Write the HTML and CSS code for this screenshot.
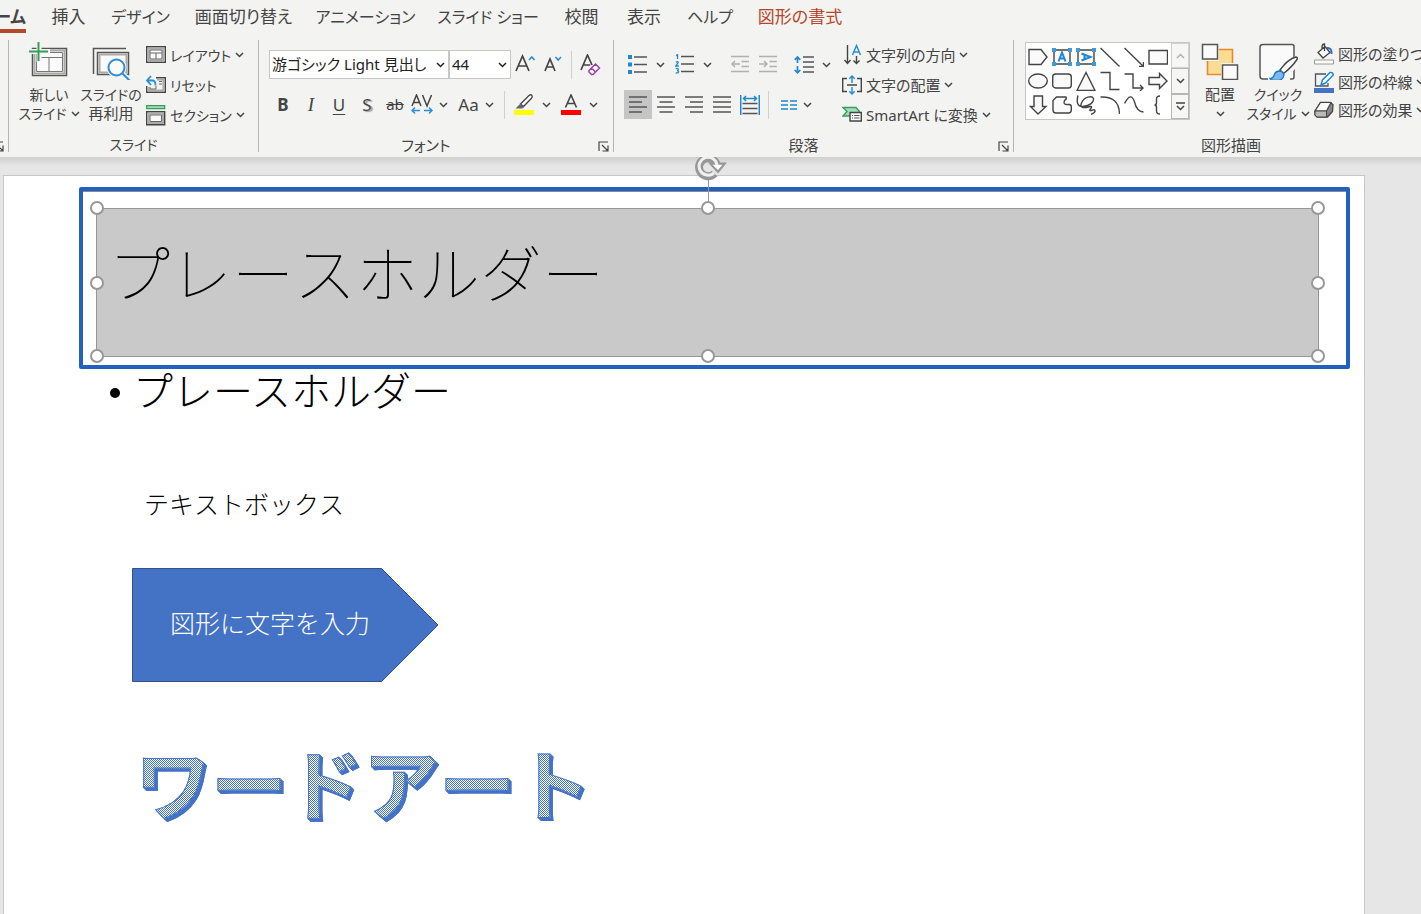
FILE: index.html
```html
<!DOCTYPE html>
<html lang="ja">
<head>
<meta charset="utf-8">
<title>プレゼンテーション</title>
<link rel="stylesheet" href="styles.css">
</head>
<body>
<svg class="defs" aria-hidden="true">
  <symbol id="chev" viewBox="0 0 9 6"><path d="M1 1l3.500 3.500L8 1" fill="none" stroke="currentColor" stroke-width="1.500"/></symbol>
  <symbol id="launch" viewBox="0 0 11 11"><path d="M1 10V1h9M4 4l5.500 5.500M10 4.500V10H4.500" fill="none" stroke="#444" stroke-width="1.200"/></symbol>
</svg>

<nav class="tabs">
  <a class="tab tab-home" href="#home">ホーム</a>
  <a class="tab" href="#insert">挿入</a>
  <a class="tab kana" href="#design">デザイン</a>
  <a class="tab" href="#transitions">画面切り替え</a>
  <a class="tab kana" href="#animations">アニメーション</a>
  <a class="tab kana" href="#slideshow">スライド ショー</a>
  <a class="tab" href="#review">校閲</a>
  <a class="tab" href="#view">表示</a>
  <a class="tab kana" href="#help">ヘルプ</a>
  <a class="tab tab-format" href="#format">図形の書式</a>
</nav>

<div class="ribbon">
  <section class="group group-clip">
    <button class="launcher" aria-label="クリップボード"><svg width="11" height="11"><use href="#launch"/></svg></button>
  </section>

  <section class="group group-slides">
    <div class="group-body">
      <button class="big big-new">
        <svg width="40" height="40" viewBox="0 0 40 40">
          <path d="M3.500 8.500h34v27h-34z" fill="#fafafa" stroke="#555" stroke-width="1.500"/>
          <path d="M5.500 10.500h30v23h-30z" fill="#fafafa" stroke="#aaa" stroke-width="2"/>
          <path d="M7.500 12.500h26v19h-26zM7.500 17.500h26M20 17.500v14" fill="none" stroke="#777"/>
          <path d="M0 11.500h21M10 2v20" stroke="#f3f3f1" stroke-width="5"/>
          <path d="M0 11.500h19M9.500 2v19" stroke="#35a05a" stroke-width="2"/>
        </svg>
        <span>新しい</span><span>スライド <svg class="chev"><use href="#chev"/></svg></span>
      </button>
      <button class="big big-reuse">
        <svg width="40" height="40" viewBox="0 0 40 40">
          <path d="M2.500 34V8.500H35" fill="none" stroke="#555" stroke-width="1.500"/>
          <path d="M6.500 12.500h31v22h-31z" fill="#fafafa" stroke="#555" stroke-width="1.500"/>
          <path d="M8.500 14.500h27v18h-27z" fill="#fafafa" stroke="#aaa" stroke-width="2"/>
          <circle cx="25.500" cy="27.500" r="10" fill="#f3f3f1"/>
          <path d="M31 33l9 9" stroke="#f3f3f1" stroke-width="5"/>
          <circle cx="25.500" cy="27.500" r="8" fill="#fafafa" stroke="#2b8fd6" stroke-width="2"/>
          <path d="M31 33l8 8" stroke="#2b8fd6" stroke-width="2"/>
        </svg>
        <span>スライドの</span><span class="kanji">再利用</span>
      </button>
      <div class="rows">
        <button class="row"><svg width="20" height="20" viewBox="0 0 20 20"><path d="M.7 1.700h18.600v15.600H.7z" fill="#fafafa" stroke="#444" stroke-width="1.400"/><path d="M2.500 3.500h15v12h-15z" fill="none" stroke="#aaa" stroke-width="2"/><path d="M4 5h12v9H4zM4 8h12M10 8v6" fill="none" stroke="#666"/></svg><span>レイアウト</span><svg class="chev"><use href="#chev"/></svg></button>
        <button class="row"><svg width="20" height="20" viewBox="0 0 20 20"><path d="M10 2.700h9.300v14.600H.7V11" fill="none" stroke="#444" stroke-width="1.400"/><path d="M11 4.500h6.500v11h-15V12" fill="none" stroke="#aaa" stroke-width="2"/><path d="M13 6.500h3M13 9h3M10 11v3H4v-2" fill="none" stroke="#666"/><path d="M1 5.500h5.500q3 0 3 5M5 1L1 5.500 5 10" fill="none" stroke="#2b8fd6" stroke-width="1.800"/></svg><span>リセット</span></button>
        <button class="row"><svg width="20" height="22" viewBox="0 0 20 22"><path d="M.7 1.700h18v3H.7z" fill="#a8dcb8" stroke="#35a05a" stroke-width="1.200"/><path d="M.7 7.700h18v13H.7z" fill="#fafafa" stroke="#444" stroke-width="1.400"/><path d="M2.500 9.500h14.500v9.500h-14.500z" fill="none" stroke="#aaa" stroke-width="2"/><path d="M4 11h11.500v6.500H4z" fill="none" stroke="#666"/></svg><span>セクション</span><svg class="chev"><use href="#chev"/></svg></button>
      </div>
    </div>
    <div class="group-label">スライド</div>
  </section>

  <section class="group group-font">
    <div class="group-body stack">
      <div class="line">
        <label class="combo combo-name"><select aria-label="フォント"><option>游ゴシック Light 見出し</option></select><svg class="chev"><use href="#chev"/></svg></label>
        <label class="combo combo-size"><select aria-label="フォント サイズ"><option>44</option></select><svg class="chev"><use href="#chev"/></svg></label>
        <button class="tool w28" aria-label="フォント サイズの拡大"><svg width="20" height="22" viewBox="0 0 20 22"><path d="M1 17L7.500 2 14 17M3.200 12h8.600" fill="none" stroke="#444" stroke-width="1.700"/><path d="M14 6l2.700-3L19.500 6" fill="none" stroke="#2b8fd6" stroke-width="1.600"/></svg></button>
        <button class="tool w28" aria-label="フォント サイズの縮小"><svg width="20" height="22" viewBox="0 0 20 22"><path d="M2 17L7 5 12 17M3.700 13h6.600" fill="none" stroke="#444" stroke-width="1.700"/><path d="M12.500 3l2.700 3L18 3" fill="none" stroke="#2b8fd6" stroke-width="1.600"/></svg></button>
        <i class="sep sep-clear"></i>
        <button class="tool w36" aria-label="書式のクリア"><svg width="22" height="22" viewBox="0 0 22 22"><path d="M2 16L8.500 1 13 11M4.200 11h7" fill="none" stroke="#444" stroke-width="1.700"/><path d="M10 16.500l6.500-6.500 4 4-6.500 6.500h-1.500L10 18zM12.500 14l4 4" fill="#fafafa" stroke="#9b3fa8" stroke-width="1.500"/></svg></button>
      </div>
      <div class="line">
        <button class="tool w28 t-b">B</button>
        <button class="tool w28 t-i">I</button>
        <button class="tool w28 t-u">U</button>
        <button class="tool w28 t-s">S</button>
        <button class="tool w28 t-x">ab</button>
        <button class="tool w41" aria-label="文字の間隔"><svg width="22" height="22" viewBox="0 0 22 22"><path d="M1 12L5.500 1 10 12M2.500 8.500h6M11.500 1L16 12l4.500-11" fill="none" stroke="#444" stroke-width="1.500"/><path d="M1 16.500h8M13 16.500h8M4 13.500l-3 3 3 3M18 13.500l3 3-3 3" fill="none" stroke="#2b8fd6" stroke-width="1.500"/></svg><svg class="chev"><use href="#chev"/></svg></button>
        <button class="tool w52 t-aa">Aa<svg class="chev"><use href="#chev"/></svg></button>
        <i class="sep sep-color"></i>
        <button class="tool w47 spread" aria-label="蛍光ペンの色"><svg width="20" height="22" viewBox="0 0 20 22"><path d="M6.500 10L15 1.500q2-1.500 3 0 .8 1.200-.5 2.700L9.500 12.500z" fill="#fafafa" stroke="#444" stroke-width="1.300"/><path d="M6.500 9.500l3.500 3.500-1.500 1.500H1.500z" fill="#666"/><path d="M0 16h20v5H0z" fill="#ff0"/></svg><svg class="chev"><use href="#chev"/></svg></button>
        <button class="tool w47 spread" aria-label="フォントの色"><svg width="20" height="22" viewBox="0 0 20 22"><path d="M4.500 13.500L10 1l5.500 12.500M6.500 9.500h7" fill="none" stroke="#444" stroke-width="1.600"/><path d="M0 16h20v5H0z" fill="#f00"/></svg><svg class="chev"><use href="#chev"/></svg></button>
      </div>
    </div>
    <div class="group-label label-launch">フォント</div>
    <button class="launcher" aria-label="フォントの設定"><svg width="11" height="11"><use href="#launch"/></svg></button>
  </section>

  <section class="group group-para">
    <div class="group-body">
      <div class="stack para-left">
        <div class="line">
          <button class="tool w47 spread" aria-label="箇条書き"><svg width="20" height="20" viewBox="0 0 20 20"><path d="M0 0h4v4H0zM0 7.500h4v4H0zM0 15h4v4H0z" fill="#1e88d2"/><path d="M6 2h13M6 9.500h13M6 17h13" stroke="#555" stroke-width="1.500"/></svg><svg class="chev"><use href="#chev"/></svg></button>
          <button class="tool w47 spread" aria-label="段落番号"><svg width="20" height="21" viewBox="0 0 20 21"><path d="M1 1.500l1.500-.8V5M.8 8.200q2.500-1.400 2.300.5L.8 12h3M.8 14.700q2.600-.8 2.500.8 0 1-1.300 1 1.500 0 1.500 1.300 0 1.600-2.800 1" fill="none" stroke="#1e88d2" stroke-width="1.300"/><path d="M6 2.500h13M6 10h13M6 17.500h13" stroke="#555" stroke-width="1.500"/></svg><svg class="chev"><use href="#chev"/></svg></button>
          <i class="sep sep-para"></i>
          <button class="tool w28" aria-label="インデントを減らす"><svg width="18" height="19" viewBox="0 0 18 19"><path d="M0 1.500h18M10.500 6.500H18M10.500 11.500H18M0 16.500h18M1 9h8M4 6L1 9l3 3" fill="none" stroke="#b0b0b0" stroke-width="1.500"/></svg></button>
          <button class="tool w28" aria-label="インデントを増やす"><svg width="18" height="19" viewBox="0 0 18 19"><path d="M0 1.500h18M10.500 6.500H18M10.500 11.500H18M0 16.500h18M0 9h8M5 6l3 3-3 3" fill="none" stroke="#b0b0b0" stroke-width="1.500"/></svg></button>
          <i class="sep sep-para"></i>
          <button class="tool w47 spread" aria-label="行間"><svg width="20" height="20" viewBox="0 0 20 20"><path d="M3.500 2v6M.7 4.800L3.500 2l2.800 2.800M3.500 11v7M.7 15l2.800 2.800L6.300 15" fill="none" stroke="#1e88d2" stroke-width="1.700"/><path d="M9 2h11M9 7h11M9 12h11M9 17h11" stroke="#555" stroke-width="1.500"/></svg><svg class="chev"><use href="#chev"/></svg></button>
        </div>
        <div class="line">
          <button class="tool w28 on" aria-label="左揃え"><svg width="18" height="18" viewBox="0 0 18 18"><path d="M0 1h18M0 6h13M0 11h18M0 16h13" stroke="#555" stroke-width="1.500"/></svg></button>
          <button class="tool w28" aria-label="中央揃え"><svg width="18" height="18" viewBox="0 0 18 18"><path d="M0 1h18M2.500 6h13M0 11h18M2.500 16h13" stroke="#555" stroke-width="1.500"/></svg></button>
          <button class="tool w28" aria-label="右揃え"><svg width="18" height="18" viewBox="0 0 18 18"><path d="M0 1h18M5 6h13M0 11h18M5 16h13" stroke="#555" stroke-width="1.500"/></svg></button>
          <button class="tool w28" aria-label="両端揃え"><svg width="18" height="18" viewBox="0 0 18 18"><path d="M0 1h18M0 6h18M0 11h18M0 16h18" stroke="#555" stroke-width="1.500"/></svg></button>
          <button class="tool w28" aria-label="均等割り付け"><svg width="20" height="20" viewBox="0 0 20 20"><path d="M.7 0v20M19.300 0v20M3.500 3.500h13M6 1L3.500 3.500 6 6M14 1l2.500 2.500L14 6" fill="none" stroke="#1e88d2" stroke-width="1.500"/><path d="M2.500 8.500h15M2.500 13.500h15M2.500 18.500h15" stroke="#555" stroke-width="1.500"/></svg></button>
          <i class="sep sep-para"></i>
          <button class="tool w47" aria-label="段の追加または削除"><svg width="16" height="10" viewBox="0 0 16 10"><path d="M0 1h7M9 1h7M0 5h7M9 5h7M0 9h7M9 9h7" stroke="#1e88d2" stroke-width="1.500"/></svg><svg class="chev"><use href="#chev"/></svg></button>
        </div>
      </div>
      <div class="rows para-right">
        <button class="row"><svg width="20" height="22" viewBox="0 0 20 22"><path d="M5.500 1v18M2.500 16l3 3.500 3-3.500M14.500 12v7.500M11.500 16.500l3 3 3-3" fill="none" stroke="#444" stroke-width="1.400"/><path d="M10.500 11l4-9.500 4 9.500M12 8h5" fill="none" stroke="#2b8fd6" stroke-width="1.500"/></svg><span>文字列の方向</span><svg class="chev"><use href="#chev"/></svg></button>
        <button class="row"><svg width="20" height="20" viewBox="0 0 20 20"><path d="M5 3.500H.7v13H5M15 3.500h4.300v13H15M5 10h10" fill="none" stroke="#444" stroke-width="1.400"/><path d="M10 1v7M7.300 3.700L10 1l2.700 2.700M10 12v7M7.300 16.300L10 19l2.700-2.700" fill="none" stroke="#2b8fd6" stroke-width="1.500"/></svg><span>文字の配置</span><svg class="chev"><use href="#chev"/></svg></button>
        <button class="row"><svg width="20" height="20" viewBox="0 0 20 20"><path d="M1 2.500h13l3.500 4L14 11H1l4-4.500z" fill="#a8dcb8" stroke="#35a05a" stroke-width="1.400"/><path d="M8 7.500h11.300v8.500H8z" fill="#fafafa" stroke="#444" stroke-width="1.400"/><path d="M10 10.500h1M12 10.500h5.500M10 13h1M12 13h5.500" stroke="#555"/></svg><span>SmartArt に変換</span><svg class="chev"><use href="#chev"/></svg></button>
      </div>
    </div>
    <div class="group-label label-launch">段落</div>
    <button class="launcher" aria-label="段落の設定"><svg width="11" height="11"><use href="#launch"/></svg></button>
  </section>

  <section class="group group-draw">
    <div class="group-body">
      <div class="gallery">
        <div class="shapes">
          <button aria-label="五角形"><svg viewBox="0 0 20 20"><path d="M1 2.500h12l6 7.500-6 7.500H1z"/></svg></button>
          <button aria-label="テキスト ボックス"><svg viewBox="0 0 20 20"><path d="M2 3h16v14H2z"/><path class="bl" d="M6.500 14.500L10 5.500l3.500 9M7.800 11.500h4.400"/><path class="bf" d="M0 1h4v4H0zM16 1h4v4h-4zM0 15h4v4H0zM16 15h4v4h-4z"/></svg></button>
          <button aria-label="縦書きテキスト ボックス"><svg viewBox="0 0 20 20"><path d="M2 3h16v14H2z"/><path class="bl" d="M5.500 6.500l9 3.500-9 3.500M8.500 7.800v4.400"/><path class="bf" d="M0 1h4v4H0zM16 1h4v4h-4zM0 15h4v4H0zM16 15h4v4h-4z"/></svg></button>
          <button aria-label="線"><svg viewBox="0 0 20 20"><path d="M.5 1l19 18.500"/></svg></button>
          <button aria-label="矢印"><svg viewBox="0 0 20 20"><path class="nf" d="M.5 1l19 18.500M19.500 15v4.500H15"/></svg></button>
          <button aria-label="四角形"><svg viewBox="0 0 20 20"><path d="M1 3.500h18.500v13.500H1z"/></svg></button>
          <button aria-label="楕円"><svg viewBox="0 0 20 20"><ellipse cx="10" cy="10" rx="9.300" ry="7"/></svg></button>
          <button aria-label="角丸四角形"><svg viewBox="0 0 20 20"><rect x=".7" y="3" width="18.600" height="14" rx="3"/></svg></button>
          <button aria-label="三角形"><svg viewBox="0 0 20 20"><path d="M10 1.500l9 18H1z"/></svg></button>
          <button aria-label="コネクタ"><svg viewBox="0 0 20 20"><path class="nf" d="M.5 1.500H10v17h9.500"/></svg></button>
          <button aria-label="矢印コネクタ"><svg viewBox="0 0 20 20"><path class="nf" d="M.5 3H9v14h10M16 14l3 3-3 3"/></svg></button>
          <button aria-label="右矢印"><svg viewBox="0 0 20 20"><path d="M1 6.500h10.500V2.500L19 10l-7.500 7.500v-4H1z"/></svg></button>
          <button aria-label="下矢印"><svg viewBox="0 0 20 20"><path d="M6 1h8.500v10.500H18L10 19l-7.500-7.500H6z"/></svg></button>
          <button aria-label="フリーフォーム"><svg viewBox="0 0 20 20"><path d="M1 5.500L4.500 2H14q1 2-1.500 3.500-1.500 4 2 4h2.500q2.300 0 2.300 2.500V15q0 3-3 3H4q-3 0-3-3z"/></svg></button>
          <button aria-label="スクリブル"><svg viewBox="0 0 20 20"><path class="nf" d="M2 .5C0 8 2 12 7 11.500 14 11 18 7 17.500 3.500 16 0 8 2 5.500 8 3 14 9 13 14 11.500c4-.5-1 3 0 4 2 .5 4-2 5 0 .5 2-2 3-4 4"/></svg></button>
          <button aria-label="円弧"><svg viewBox="0 0 20 20"><path class="nf" d="M.5 2Q19 1 19.500 19"/></svg></button>
          <button aria-label="曲線"><svg viewBox="0 0 20 20"><path class="nf" d="M.5 8.500Q7-4 10.500 7 13 17 19.500 17"/></svg></button>
          <button aria-label="左中かっこ"><svg viewBox="0 0 20 20"><path class="nf" d="M12 1q-3.500 0-3.500 3v3.500q0 2.500-2 2.500 2 0 2 2.500V16q0 3 3.500 3"/></svg></button>
        </div>
        <div class="scroll">
          <button class="dim" aria-label="上へ"><svg width="9" height="6" viewBox="0 0 9 6"><path d="M1 5l3.500-3.500L8 5" fill="none" stroke="currentColor" stroke-width="1.500"/></svg></button>
          <button aria-label="下へ"><svg class="chev"><use href="#chev"/></svg></button>
          <button aria-label="その他"><svg width="9" height="9" viewBox="0 0 9 9"><path d="M0 1h9M1 4l3.500 3.500L8 4" fill="none" stroke="currentColor" stroke-width="1.500"/></svg></button>
        </div>
      </div>
      <button class="big big-arrange">
        <svg width="40" height="40" viewBox="0 0 40 40"><path d="M7.500 9.500h25v25h-25z" fill="#fbdc92" stroke="#e88a2a" stroke-width="1.600"/><path d="M1 3h18v18H1zM21 23h18v18H21z" fill="#f3f3f1"/><path d="M2.500 4.500h15v14.500h-15zM22.500 25h15v14.500h-15z" fill="#fafafa" stroke="#555" stroke-width="1.500"/></svg>
        <span class="kanji">配置</span><span><svg class="chev"><use href="#chev"/></svg></span>
      </button>
      <button class="big big-quick">
        <svg width="40" height="40" viewBox="0 0 40 40"><path d="M5 4.500h29q2 0 2 2V37q0 2-2 2H5q-3 0-3-3V7q0-2.500 3-2.500z" fill="#fafafa" stroke="#555" stroke-width="1.500"/><path d="M40 14L20 29 10 37v5h22v-7l8-10z" fill="#f6f6f5"/><path d="M22 30Q30 19 38 17q2 .5 1 2.500Q34 27 25.500 33.500z" fill="#fafafa" stroke="#444" stroke-width="1.400"/><path d="M21 31q4 0 5 4-1 6-9 5.500-4 0-5-2 3 0 4-3 1-4 5-4.500z" fill="#7db8ec" stroke="#1e78c8" stroke-width="1.400"/></svg>
        <span>クイック</span><span>スタイル <svg class="chev"><use href="#chev"/></svg></span>
      </button>
      <div class="rows rows-tight">
        <button class="row"><svg width="20" height="22" viewBox="0 0 20 22"><path d="M4 9.500l7-6 5 6-7 5.500zM8 6.500V3q.5-2 2.500-2v7" fill="#fafafa" stroke="#444" stroke-width="1.300"/><path d="M13 5q5-.5 4.500 6" fill="none" stroke="#2b6cc4" stroke-width="2"/><path d="M.5 17h19v4H.5z" fill="#fff" stroke="#999"/></svg><span>図形の塗りつぶし</span><svg class="chev"><use href="#chev"/></svg></button>
        <button class="row"><svg width="20" height="22" viewBox="0 0 20 22"><path d="M12 3H1.500v12H14v-3" fill="none" stroke="#555" stroke-width="1.300"/><path d="M7 14l1.500-5L16 1.500q3-.5 3.300 2.500L11.500 12z" fill="#fafafa" stroke="#1e88d2" stroke-width="1.500"/><path d="M0 17h20v5H0z" fill="#4472c4"/></svg><span>図形の枠線</span><svg class="chev"><use href="#chev"/></svg></button>
        <button class="row"><svg width="20" height="20" viewBox="0 0 20 20"><path d="M1 11l5.500-8.500H16l3 2-.5 7-5 5.500H3l-2-2z" fill="#888" stroke="#444" stroke-width="1.300"/><path d="M6.500 2.500H17L12.500 11H1z" fill="#fafafa" stroke="#444" stroke-width="1.200"/><path d="M1 11h11.500v6H3l-2-2z" fill="#bbb" stroke="#444"/></svg><span>図形の効果</span><svg class="chev"><use href="#chev"/></svg></button>
      </div>
    </div>
    <div class="group-label">図形描画</div>
  </section>
</div>

<main class="workspace">
  <div class="slide">
    <div class="frame"></div>
    <div class="title-box">
      <h1>プレースホルダー</h1>
      <i class="stem"></i>
      <svg class="rotate" width="34" height="28" viewBox="0 0 34 28">
        <path d="M20.500 20.500A9 9 0 1 1 23 13" fill="none" stroke="#979797" stroke-width="8"/>
        <path d="M14 9.500H33L24 20.500z" fill="#979797"/>
        <path d="M20 20A9 9 0 1 1 23 12" fill="none" stroke="#f0f0f0" stroke-width="3"/>
        <path d="M18.500 11.800h10L24 17z" fill="#fff"/>
      </svg>
      <i class="knob n w"></i><i class="knob n c"></i><i class="knob n e"></i>
      <i class="knob m w"></i><i class="knob m e"></i>
      <i class="knob s w"></i><i class="knob s c"></i><i class="knob s e"></i>
    </div>
    <ul class="body-box"><li>プレースホルダー</li></ul>
    <p class="text-box">テキストボックス</p>
    <div class="arrow-box">
      <svg width="307" height="115" viewBox="0 0 307 115"><path d="M.5.500h249L306 57 249.500 113.500H.5z" fill="#4472c4" stroke="#2f528f"/></svg>
      <span>図形に文字を入力</span>
    </div>
    <p class="wordart"><span>ワードアート</span></p>
  </div>
</main>
</body>
</html>
```
FILE: styles.css
```css
* { box-sizing: border-box; }

body {
  margin: 0;
  height: 100vh;
  display: flex;
  flex-direction: column;
  overflow: hidden;
  background: #e6e6e6;
  color: #444;
  font: 15px/19px "Noto Sans", "Noto Sans CJK JP", sans-serif;
  font-feature-settings: "palt";
}

button, select {
  font: inherit;
  font-feature-settings: inherit;
  color: inherit;
  background: none;
  border: 0;
  padding: 0;
  margin: 0;
}

svg { flex: none; display: block; }
.defs { position: absolute; width: 0; height: 0; }
.chev { width: 9px; height: 6px; }

/* Tabs */
.tabs {
  flex: none;
  height: 36px;
  display: grid;
  grid-template-columns: 38px 61px 83px 123px 121px 124px 63px 62px 70px 110px;
  background: #f3f3f1;
  font-size: 17px;
  line-height: 34px;
}
.tab {
  color: inherit;
  text-decoration: none;
  text-align: center;
  white-space: nowrap;
}
.kana { font-size: 16px; }
.tab-home {
  display: flex;
  justify-content: flex-end;
  width: 26px;
  height: 33px;
  font-weight: 700;
  border-bottom: 4px solid #b7472a;
}
.tab-format { color: #b7472a; }

/* Ribbon */
.ribbon {
  flex: none;
  display: flex;
  padding-top: 4px;
  height: 121px;
  overflow: hidden;
  background: #f3f3f1;
}
.group {
  position: relative;
  flex: none;
  display: flex;
  flex-direction: column;
  height: 112px;
  border-right: 1px solid #b5b5b3;
}
.group-clip { width: 9px; }
.group-slides { width: 250px; }
.group-font { width: 355px; }
.group-para { width: 400px; }
.group-draw { width: 460px; border-right: 0; }
.group-body { flex: none; height: 94px; display: flex; }
.group-label { line-height: 22px; text-align: center; }
.group-slides .group-label { font-size: 14px; }
.label-launch { padding-right: 20px; }
.group-draw .group-label { padding-right: 26px; }
.launcher { position: absolute; right: 4px; bottom: 0; }

.big {
  flex: none;
  display: flex;
  flex-direction: column;
  align-items: center;
  height: 84px;
  white-space: nowrap;
  font-size: 14px;
}
.big > svg { margin-bottom: 5px; }
.big span { min-height: 19px; display: flex; align-items: center; gap: 4px; }
.big .kanji { font-size: 15px; }
.big-new { width: 64px; margin-left: 8px; }
.big-reuse { width: 60px; }
.big-arrange { width: 46px; margin-left: 7px; }
.big-quick { width: 70px; }

.rows { display: flex; flex-direction: column; margin-left: 5px; }
.row {
  height: 30px;
  display: flex;
  align-items: center;
  gap: 4px;
  white-space: nowrap;
}
.group-slides .row { font-size: 14px; }
.rows-tight { margin-left: 1px; }
.rows-tight .row { height: 28px; }

.stack { display: flex; flex-direction: column; gap: 11px; padding-top: 10px; }
.group-font .stack { padding-left: 10px; }
.line { display: flex; align-items: center; height: 29px; }
.sep { width: 1px; height: 28px; background: #cfcfcd; }
.sep-clear { margin-left: 4px; }
.sep-color { margin: 0 5px 0 2px; }
.sep-para { margin: 0 4px; }

.combo {
  display: flex;
  align-items: center;
  height: 29px;
  padding: 0 3px 0 2px;
  background: #fff;
  border: 1px solid #c6c6c4;
  color: #222;
}
.combo select { flex: 1; min-width: 0; appearance: none; outline: 0; }
.combo-name { width: 180px; }
.combo-size { width: 62px; }

.tool {
  flex: none;
  height: 29px;
  display: flex;
  align-items: center;
  justify-content: center;
  gap: 6px;
}
.w28 { width: 28px; }
.w36 { width: 36px; }
.w41 { width: 41px; }
.w52 { width: 52px; }
.w47 { width: 47px; }
.spread { justify-content: flex-start; gap: 8px; padding-left: 4px; }
.on { background: #c5c5c5; }
.t-b { font-weight: 700; font-size: 17px; }
.t-i { font-family: "Liberation Serif", serif; font-style: italic; font-size: 19px; }
.t-u { font-size: 17px; text-decoration: underline; text-underline-offset: 3px; }
.t-s { font-size: 17px; text-shadow: 2px 1px 1px #999; }
.t-x { text-decoration: line-through; }
.t-aa { font-size: 17px; }

.para-left { width: 218px; padding-left: 10px; }
.para-right { margin-left: 10px; }

.gallery {
  flex: none;
  display: flex;
  width: 165px;
  height: 78px;
  margin: 2px 0 0 11px;
  background: #fff;
  border: 1px solid #c6c6c4;
}
.shapes {
  flex: 1;
  display: grid;
  grid-template-columns: repeat(6, 24px);
  grid-template-rows: repeat(3, 24px);
  padding-top: 2px;
}
.shapes button { display: grid; place-items: center; }
.shapes svg { width: 20px; height: 20px; fill: #fafafa; stroke: #444; stroke-width: 1.4px; }
.shapes .nf { fill: none; }
.shapes .bl { fill: none; stroke: #1e88d2; stroke-width: 2px; }
.shapes .bf { fill: #3d9adb; stroke: none; }
.scroll { width: 18px; display: flex; flex-direction: column; }
.scroll button {
  flex: 1;
  display: grid;
  place-items: center;
  border: 1px solid #b5b5b3;
  background: #f6f6f5;
}
.scroll .dim { color: #b0b0b0; border-color: #d0d0ce; }

/* Editing area */
.workspace {
  flex: 1;
  display: flex;
  overflow: hidden;
  padding: 18px 56px 0 3px;
  background: linear-gradient(#d0d0d0, #e6e6e6 9px);
}
.slide {
  position: relative;
  flex: 1;
  background: #fff;
  border: 1px solid #c6c6c6;
  border-bottom: 0;
  color: #000;
  font-family: "Noto Sans CJK JP", sans-serif;
  font-feature-settings: normal;
  font-weight: 300;
}
.frame {
  position: absolute;
  left: 75px;
  right: 14px;
  top: 11px;
  height: 182px;
  border: 4px solid #2062bd;
  border-radius: 2px;
  box-shadow: 0 1px 0 #8a8a8a inset;
}
.title-box {
  position: absolute;
  left: 92px;
  right: 45px;
  top: 32px;
  height: 149px;
  padding: 0 11px 24px;
  display: flex;
  align-items: center;
  background: #c9c9c9;
  border: 1px solid #979797;
}
h1 { margin: 0; font-size: 62px; line-height: 80px; font-weight: 100; font-kerning: none; }
.stem {
  position: absolute;
  left: 50%;
  top: -32px;
  width: 1px;
  height: 32px;
  background: #979797;
}
.rotate { position: absolute; left: calc(50% - 14px); top: -56px; }
.knob {
  position: absolute;
  width: 14px;
  height: 14px;
  margin: -7px;
  border: 2px solid #979797;
  border-radius: 50%;
  background: #fff;
}
.n { top: -1px; }
.m { top: 50%; }
.s { top: 100%; }
.w { left: 0; }
.c { left: 50%; }
.e { left: 100%; }

.body-box {
  position: absolute;
  left: 106px;
  top: 187px;
  margin: 0;
  padding: 0;
  list-style: none;
  font-size: 40px;
  line-height: 52px;
}
.body-box li { display: flex; align-items: center; gap: 13px; }
.body-box li::before {
  content: "";
  width: 10px;
  height: 10px;
  margin-top: 8px;
  border-radius: 50%;
  background: #000;
}
.text-box {
  position: absolute;
  left: 140px;
  top: 309px;
  margin: 0;
  font-size: 25px;
  line-height: 36px;
  font-kerning: none;
}
.arrow-box {
  position: absolute;
  left: 128px;
  top: 392px;
  display: grid;
}
.arrow-box > * { grid-area: 1 / 1; }
.arrow-box span {
  align-self: center;
  padding: 0 0 8px 38px;
  color: #fff;
  font-size: 25px;
  line-height: 36px;
}
.wordart {
  position: absolute;
  left: 131px;
  top: 550px;
  margin: 0;
  font-size: 76px;
  line-height: 110px;
  font-weight: 700;
  font-kerning: none;
  white-space: nowrap;
  filter: drop-shadow(1px 1px 0 #4472c4) drop-shadow(2px 2px 0 #4472c4);
}
.wordart span {
  color: transparent;
  background: repeating-conic-gradient(#4472c4 0 25%, #fff 0 50%) 0 0 / 2px 2px;
  background-clip: text;
  -webkit-background-clip: text;
  -webkit-text-stroke: 1px #4472c4;
}
```
